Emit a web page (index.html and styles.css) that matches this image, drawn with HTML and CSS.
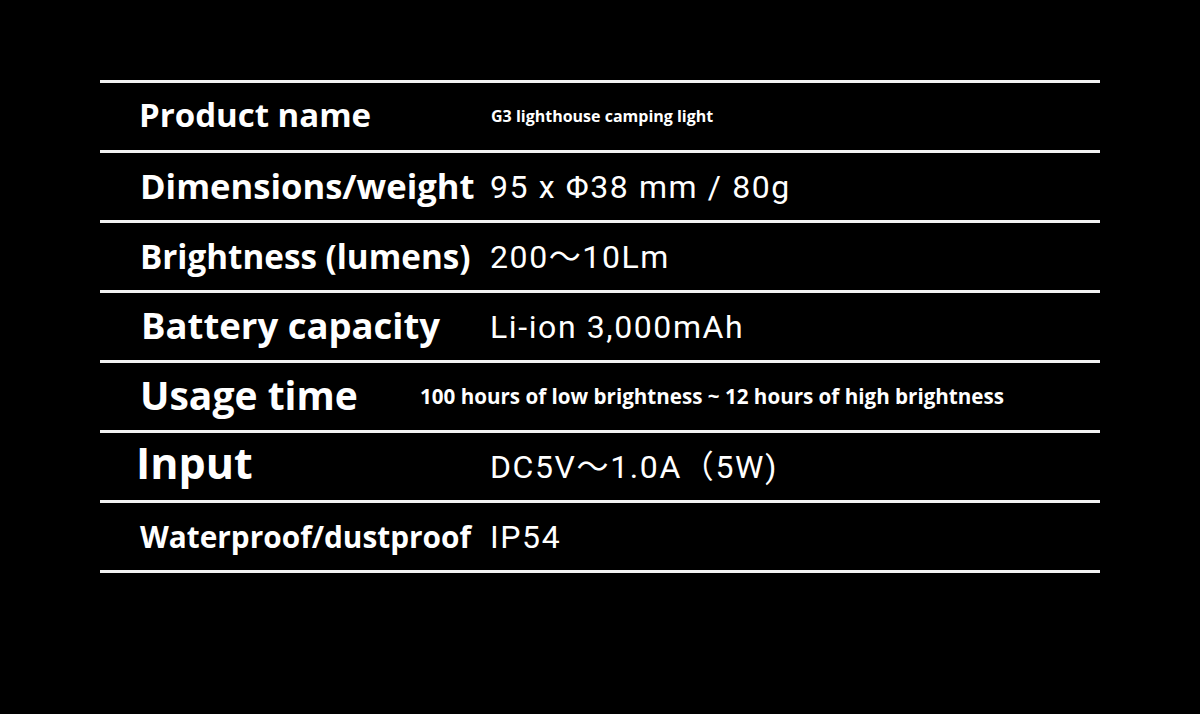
FILE: index.html
```html
<!DOCTYPE html>
<html lang="en">
<head>
<meta charset="utf-8">
<title>G3 lighthouse camping light specifications</title>
<link rel="stylesheet" href="styles.css">
</head>
<body>
<div class="page">
  <div class="spec-table">
    <div class="row">
      <div class="label label-product">Product name</div>
      <div class="value value-small">G3 lighthouse camping light</div>
    </div>
    <div class="row">
      <div class="label label-dim">Dimensions/weight</div>
      <div class="value">95 x Φ38 mm / 80g</div>
    </div>
    <div class="row">
      <div class="label label-bright">Brightness (lumens)</div>
      <div class="value">200～10Lm</div>
    </div>
    <div class="row">
      <div class="label label-battery">Battery capacity</div>
      <div class="value">Li-ion 3,000mAh</div>
    </div>
    <div class="row">
      <div class="label label-usage">Usage time</div>
      <div class="value value-usage">100 hours of low brightness ~ 12 hours of high brightness</div>
    </div>
    <div class="row">
      <div class="label label-input">Input</div>
      <div class="value">DC5V～1.0A（5W)</div>
    </div>
    <div class="row">
      <div class="label label-water">Waterproof/dustproof</div>
      <div class="value">IP54</div>
    </div>
  </div>
</div>
</body>
</html>
```

FILE: styles.css
```css
html, body {
  margin: 0;
  padding: 0;
  background: #000;
}

.page {
  width: 1200px;
  height: 714px;
  background: #000;
  padding: 80px 100px 0;
  box-sizing: border-box;
  color: #fff;
}

.spec-table {
  width: 1000px;
  border-bottom: 3px solid #f2f2f2;
}

.row {
  height: 70px;
  box-sizing: border-box;
  border-top: 3px solid #f2f2f2;
  display: flex;
  align-items: center;
}

.label {
  font-family: "Open Sans", "Liberation Sans", sans-serif;
  font-weight: 700;
  width: 390px;
  box-sizing: border-box;
  padding-left: 40px;
  flex: none;
  white-space: nowrap;
  line-height: 1;
}

.label-product { font-size: 33px; padding-left: 39px; padding-bottom: 4px; }
.label-dim { font-size: 34.6px; padding-left: 40px; }
.label-bright { font-size: 33.2px; padding-left: 40px; }
.label-battery { font-size: 36.5px; padding-left: 41px; padding-bottom: 2px; }
.label-usage { font-size: 39px; padding-left: 40px; width: 320px; padding-bottom: 4px; }
.label-input { font-size: 43px; padding-left: 36px; padding-bottom: 8px; }
.label-water { font-size: 29.8px; padding-left: 40px; }

.value {
  font-family: Roboto, "Noto Sans CJK SC", "Liberation Sans", sans-serif;
  font-weight: 400;
  font-size: 32px;
  letter-spacing: 1.6px;
  line-height: 1;
  white-space: nowrap;
}

.value-small {
  font-family: "Open Sans", "Liberation Sans", sans-serif;
  font-weight: 700;
  font-size: 16px;
  letter-spacing: 0;
  padding-left: 1px;
  padding-bottom: 2px;
}

.value-usage {
  font-family: "Open Sans", "Liberation Sans", sans-serif;
  font-weight: 700;
  font-size: 20.6px;
  letter-spacing: 0;
}
```
